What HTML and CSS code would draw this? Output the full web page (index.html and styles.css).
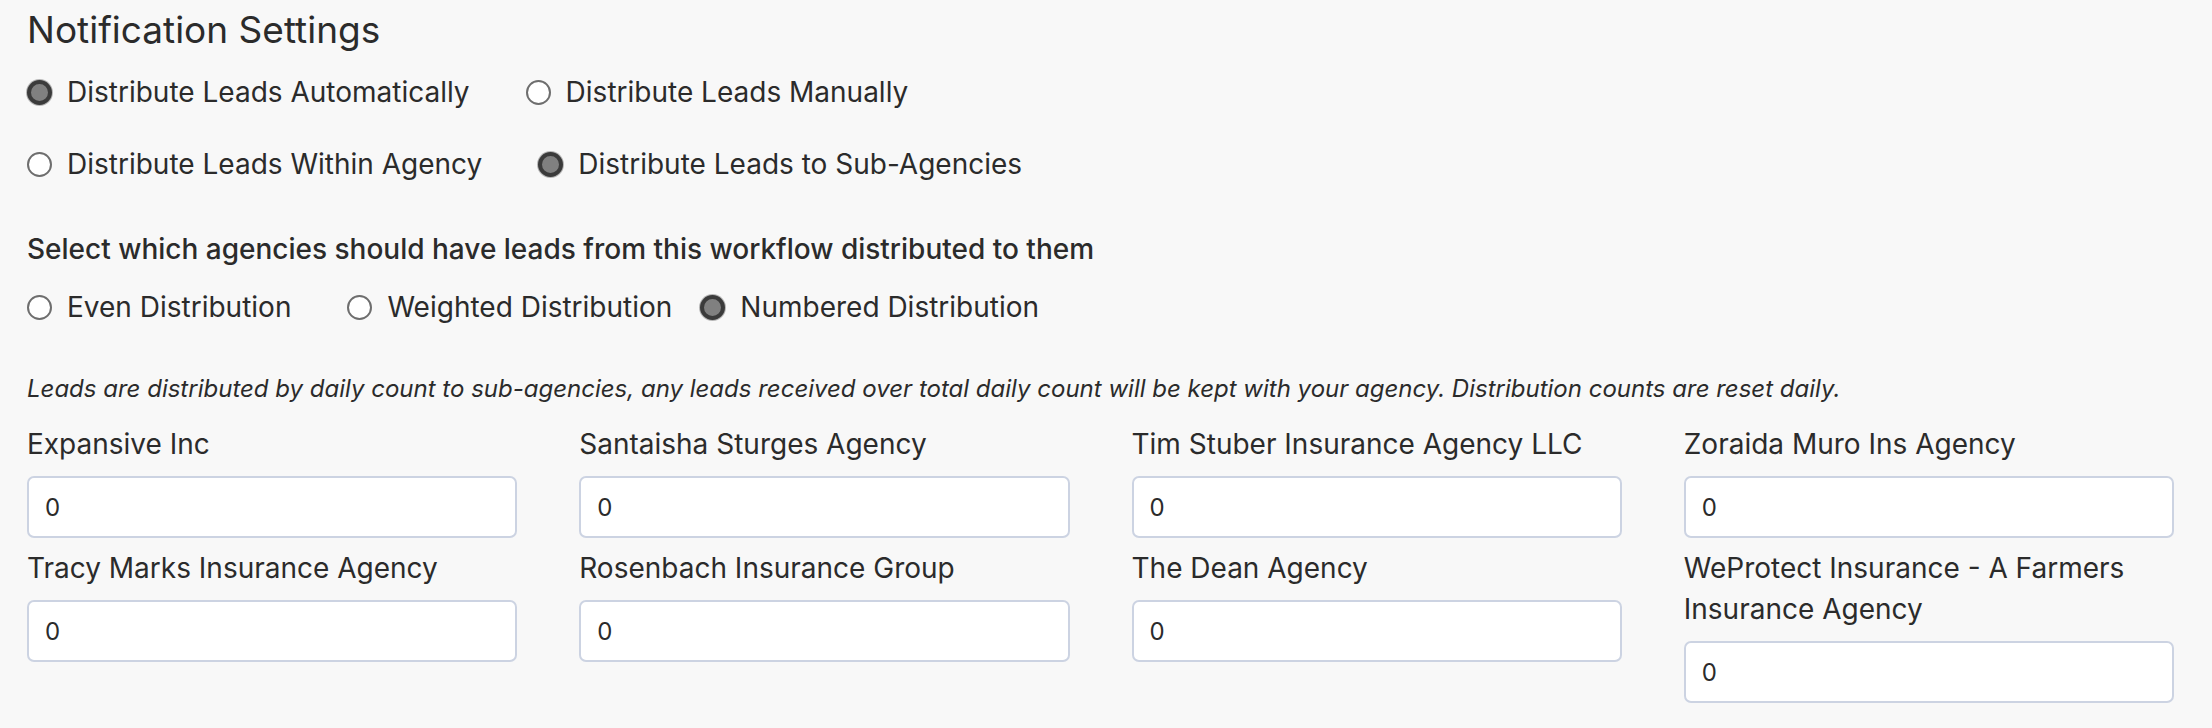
FILE: index.html
```html
<!DOCTYPE html>
<html lang="en">
<head>
    <meta charset="UTF-8">
    <meta name="viewport" content="width=device-width, initial-scale=1.0">
    <title>Notification Settings</title>
    <link rel="stylesheet" href="styles.css">
</head>
<body>
    <main class="settings">
        <h2 class="settings-title">Notification Settings</h2>

        <div class="radio-row row-mode">
            <label class="option"><input type="radio" name="mode" checked> Distribute Leads Automatically</label>
            <label class="option"><input type="radio" name="mode"> Distribute Leads Manually</label>
        </div>

        <div class="radio-row row-target">
            <label class="option"><input type="radio" name="target"> Distribute Leads Within Agency</label>
            <label class="option"><input type="radio" name="target" checked> Distribute Leads to Sub-Agencies</label>
        </div>

        <h3 class="section-heading">Select which agencies should have leads from this workflow distributed to them</h3>

        <div class="radio-row row-type">
            <label class="option option-even"><input type="radio" name="type"> Even Distribution</label>
            <label class="option option-weighted"><input type="radio" name="type"> Weighted Distribution</label>
            <label class="option"><input type="radio" name="type" checked> Numbered Distribution</label>
        </div>

        <p class="note">Leads are distributed by daily count to sub-agencies, any leads received over total daily count will be kept with your agency. Distribution counts are reset daily.</p>

        <div class="agency-grid">
            <div class="field">
                <label for="a1">Expansive Inc</label>
                <input type="text" id="a1" value="0">
            </div>
            <div class="field">
                <label for="a2">Santaisha Sturges Agency</label>
                <input type="text" id="a2" value="0">
            </div>
            <div class="field">
                <label for="a3">Tim Stuber Insurance Agency LLC</label>
                <input type="text" id="a3" value="0">
            </div>
            <div class="field">
                <label for="a4">Zoraida Muro Ins Agency</label>
                <input type="text" id="a4" value="0">
            </div>
            <div class="field">
                <label for="a5">Tracy Marks Insurance Agency</label>
                <input type="text" id="a5" value="0">
            </div>
            <div class="field">
                <label for="a6">Rosenbach Insurance Group</label>
                <input type="text" id="a6" value="0">
            </div>
            <div class="field">
                <label for="a7">The Dean Agency</label>
                <input type="text" id="a7" value="0">
            </div>
            <div class="field">
                <label for="a8">WeProtect Insurance - A Farmers Insurance Agency</label>
                <input type="text" id="a8" value="0">
            </div>
        </div>
    </main>
</body>
</html>
```

FILE: styles.css
```css
body {
    font-family: Inter, "Noto Sans", sans-serif;
    margin: 0;
    padding: 0;
    background-color: #f8f8f8;
    color: #2b2b2b;
}
.settings {
    padding: 8px 38px 40px 27px;
}
.settings-title {
    margin: 0;
    font-size: 37px;
    font-weight: 400;
    line-height: 44px;
}
.radio-row {
    display: flex;
    align-items: center;
    height: 40px;
}
.row-mode {
    margin-top: 20px;
}
.row-target {
    margin-top: 32px;
}
.row-type {
    margin-top: 18px;
}
.option {
    display: flex;
    align-items: center;
    font-size: 28px;
    margin-right: 56px;
    cursor: pointer;
}
.option-even {
    margin-right: 56px;
}
.option-weighted {
    margin-right: 28px;
}
.option input {
    appearance: none;
    -webkit-appearance: none;
    width: 25px;
    height: 25px;
    margin: 0 15px 0 0;
    border: 2px solid #6e6e6e;
    border-radius: 50%;
    background-color: #fff;
    box-sizing: border-box;
}
.option input:checked {
    border: 4px solid #3b3b3b;
    background-color: #808080;
    box-shadow: 0 0 0 1px rgba(60, 60, 60, 0.35);
}
.section-heading {
    margin: 45px 0 0;
    font-size: 28px;
    font-weight: 500;
    line-height: 40px;
}
.note {
    margin: 45px 0 0;
    font-size: 24px;
    font-style: italic;
    line-height: 34px;
}
.agency-grid {
    display: grid;
    grid-template-columns: repeat(4, 1fr);
    column-gap: 62px;
    row-gap: 10px;
    margin-top: 18px;
}
.field label {
    display: block;
    font-size: 28px;
    line-height: 41px;
    margin-bottom: 11px;
}
.field input {
    display: block;
    width: 100%;
    height: 62px;
    box-sizing: border-box;
    padding: 0 16px;
    font-family: inherit;
    font-size: 24px;
    color: #2b2b2b;
    background-color: #fff;
    border: 2px solid #ccd3e2;
    border-radius: 7px;
}
```
